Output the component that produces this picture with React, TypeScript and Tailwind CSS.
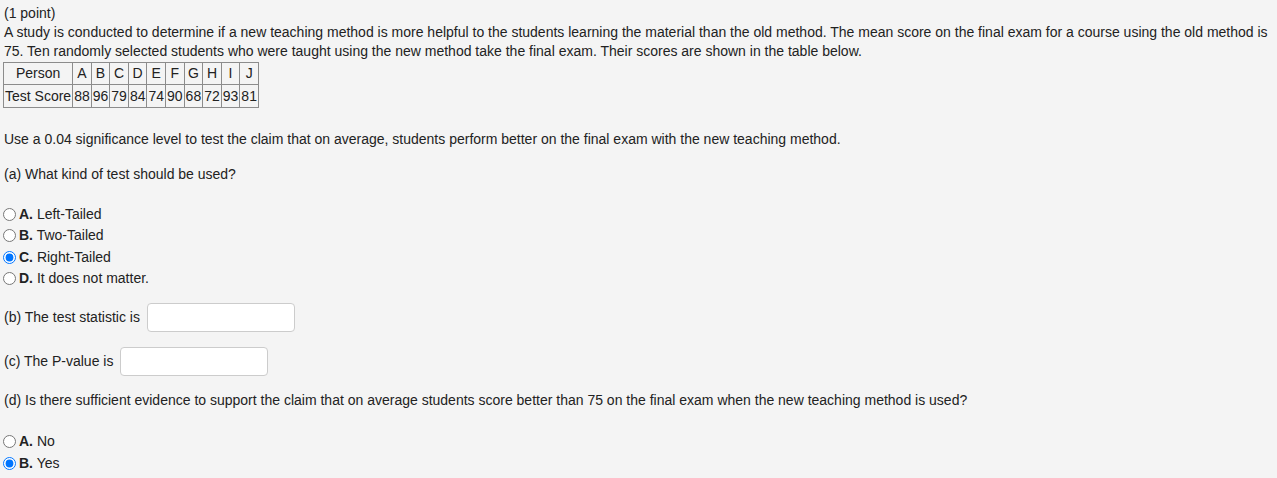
import React from "react";

const font = { fontFamily: '"Liberation Sans", Arial, sans-serif' };

function Radio({ checked }: { checked?: boolean }) {
  return (
    <input
      type="radio"
      checked={!!checked}
      readOnly
      className="m-0 ml-[3px] mr-[3px] w-[13px] h-[13px] shrink-0"
    />
  );
}

function Option({ letter, text, checked }: { letter: string; text: string; checked?: boolean }) {
  return (
    <div className="flex items-center h-[21.33px]">
      <Radio checked={checked} />
      <span>
        <b>{letter}</b> {text}
      </span>
    </div>
  );
}

export default function App() {
  const letters = ["A", "B", "C", "D", "E", "F", "G", "H", "I", "J"];
  const scores = ["88", "96", "79", "84", "74", "90", "68", "72", "93", "81"];
  const cell = "border border-[#8c8c8c] px-[1px] py-0 text-center font-normal";
  return (
    <div
      className="w-[1277px] h-[478px] bg-[#f4f4f4] text-[#222222] text-[14px] leading-[19px] pl-[4px] pt-[4px] overflow-hidden"
      style={font}
    >
      <div>(1 point)</div>
      <div>
        A study is conducted to determine if a new teaching method is more helpful to the students learning the material than the old method. The mean score on the final exam for a course using the old method is 75. Ten randomly selected students who were taught using the new method take the final exam. Their scores are shown in the table below.
      </div>
      <table className="border-collapse mt-[1px] ml-[-1px]">
        <tbody>
          <tr className="h-[22px]">
            <th className={cell}>Person</th>
            {letters.map((l) => (
              <th key={l} className={cell}>
                {l}
              </th>
            ))}
          </tr>
          <tr className="h-[23px]">
            <td className={cell}>Test Score</td>
            {scores.map((s, i) => (
              <td key={i} className={cell}>
                {s}
              </td>
            ))}
          </tr>
        </tbody>
      </table>
      <div className="mt-[22px]">
        Use a 0.04 significance level to test the claim that on average, students perform better on the final exam with the new teaching method.
      </div>
      <div className="mt-[16px]">(a) What kind of test should be used?</div>
      <div className="mt-[20px] ml-[-4px]">
        <Option letter="A." text="Left-Tailed" />
        <Option letter="B." text="Two-Tailed" />
        <Option letter="C." text="Right-Tailed" checked />
        <Option letter="D." text="It does not matter." />
      </div>
      <div className="mt-[14px] flex items-center h-[29px]">
        <span>(b) The test statistic is</span>
        <div className="ml-[7px] w-[148px] h-[29px] bg-white border border-[#cccccc] rounded-[4px]" />
      </div>
      <div className="mt-[15px] flex items-center h-[29px]">
        <span>(c) The P-value is</span>
        <div className="ml-[7px] w-[148px] h-[29px] bg-white border border-[#cccccc] rounded-[4px]" />
      </div>
      <div className="mt-[15px]">
        (d) Is there sufficient evidence to support the claim that on average students score better than 75 on the final exam when the new teaching method is used?
      </div>
      <div className="mt-[21px] ml-[-4px]">
        <Option letter="A." text="No" />
        <Option letter="B." text="Yes" checked />
      </div>
    </div>
  );
}
